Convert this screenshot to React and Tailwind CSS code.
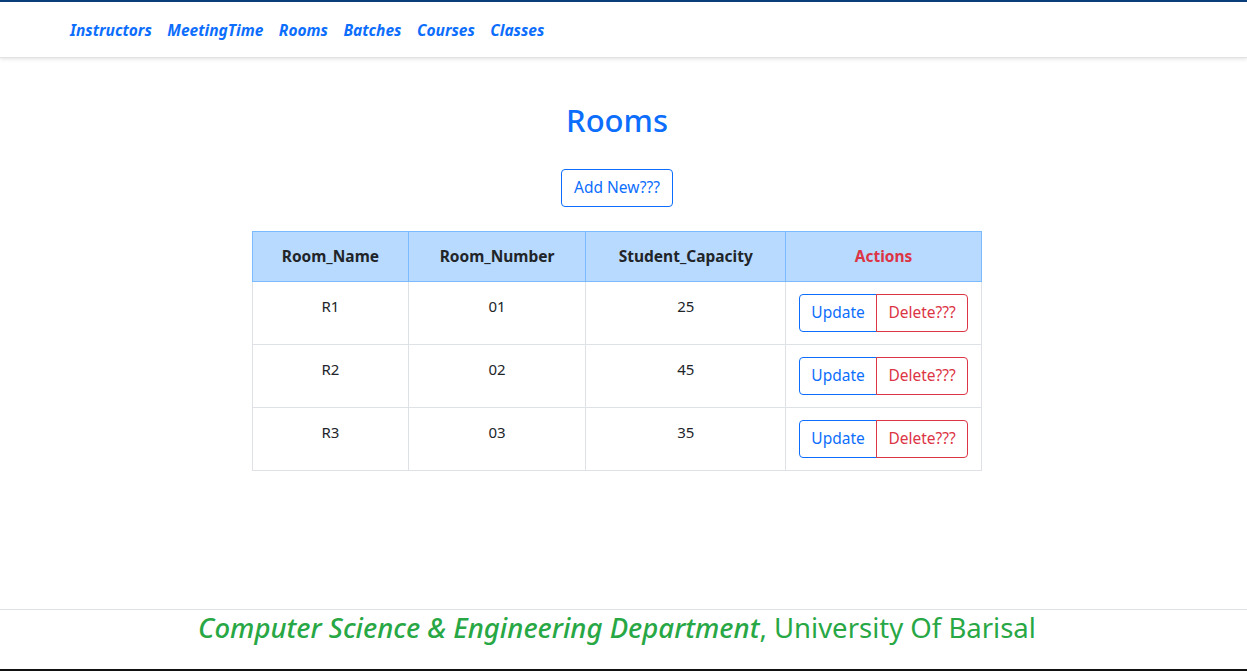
import React from "react";

const rows = [
  ["R1", "01", "25"],
  ["R2", "02", "45"],
  ["R3", "03", "35"],
];

export default function App() {
  return (
    <div
      className="flex flex-col h-[671px] bg-white overflow-hidden"
      style={{ fontFamily: '"Noto Sans", "Open Sans", sans-serif' }}
    >
      <div className="h-[2px] bg-[#0b3f7d]" />
      <nav className="h-[56px] flex items-center pl-[70px] gap-[15.5px] shadow-[0_1px_4px_rgba(0,0,0,0.12)] border-b border-[#e2e2e2] relative z-10">
        {["Instructors", "MeetingTime", "Rooms", "Batches", "Courses", "Classes"].map((l) => (
          <a key={l} className="text-[15.5px] font-bold italic text-[#0d6efd] leading-[22px] mt-[0px]">
            {l}
          </a>
        ))}
      </nav>
      <main className="flex-1 flex flex-col items-center pr-[13px]">
        <h1 className="mt-[41px] text-[31px] leading-[42px] font-medium text-[#0d6efd]">Rooms</h1>
        <button className="mt-[28px] h-[38px] px-[12px] border border-[#0d6efd] rounded-[4px] text-[15.5px] text-[#0d6efd]">
          Add New???
        </button>
        <table className="mt-[24px] w-[730px] border-collapse text-[15px] text-[#212529]">
          <thead>
            <tr className="bg-[#b8daff] h-[50px]">
              <th className="w-[156px] border border-[#7abaff] font-bold text-[15.5px]">Room_Name</th>
              <th className="w-[178px] border border-[#7abaff] font-bold text-[15.5px]">Room_Number</th>
              <th className="w-[200px] border border-[#7abaff] font-bold text-[15.5px]">Student_Capacity</th>
              <th className="w-[196px] border border-[#7abaff] font-bold text-[15.5px] text-[#dc3545]">Actions</th>
            </tr>
          </thead>
          <tbody>
            {rows.map((r) => (
              <tr key={r[0]} className="h-[63px]">
                {r.map((c, i) => (
                  <td key={i} className="border border-[#dee2e6] text-center align-top pt-[13px]">
                    {c}
                  </td>
                ))}
                <td className="border border-[#dee2e6] align-middle">
                  <div className="flex justify-center">
                    <button className="h-[38px] w-[78px] border border-[#0d6efd] rounded-l-[4px] text-[15.5px] text-[#0d6efd]">
                      Update
                    </button>
                    <button className="h-[38px] w-[92px] border border-[#dc3545] -ml-px rounded-r-[4px] text-[15.5px] text-[#dc3545]">
                      Delete???
                    </button>
                  </div>
                </td>
              </tr>
            ))}
          </tbody>
        </table>
      </main>
      <footer className="h-[60px] border-t border-[#dee2e6] flex justify-center pr-[13px]">
        <p className="text-[27.5px] leading-[36px] text-[#28a745]">
          <i className="font-medium">Computer Science &amp; Engineering Department</i>, University Of Barisal
        </p>
      </footer>
      <div className="h-[2px] bg-[#111]" />
    </div>
  );
}
